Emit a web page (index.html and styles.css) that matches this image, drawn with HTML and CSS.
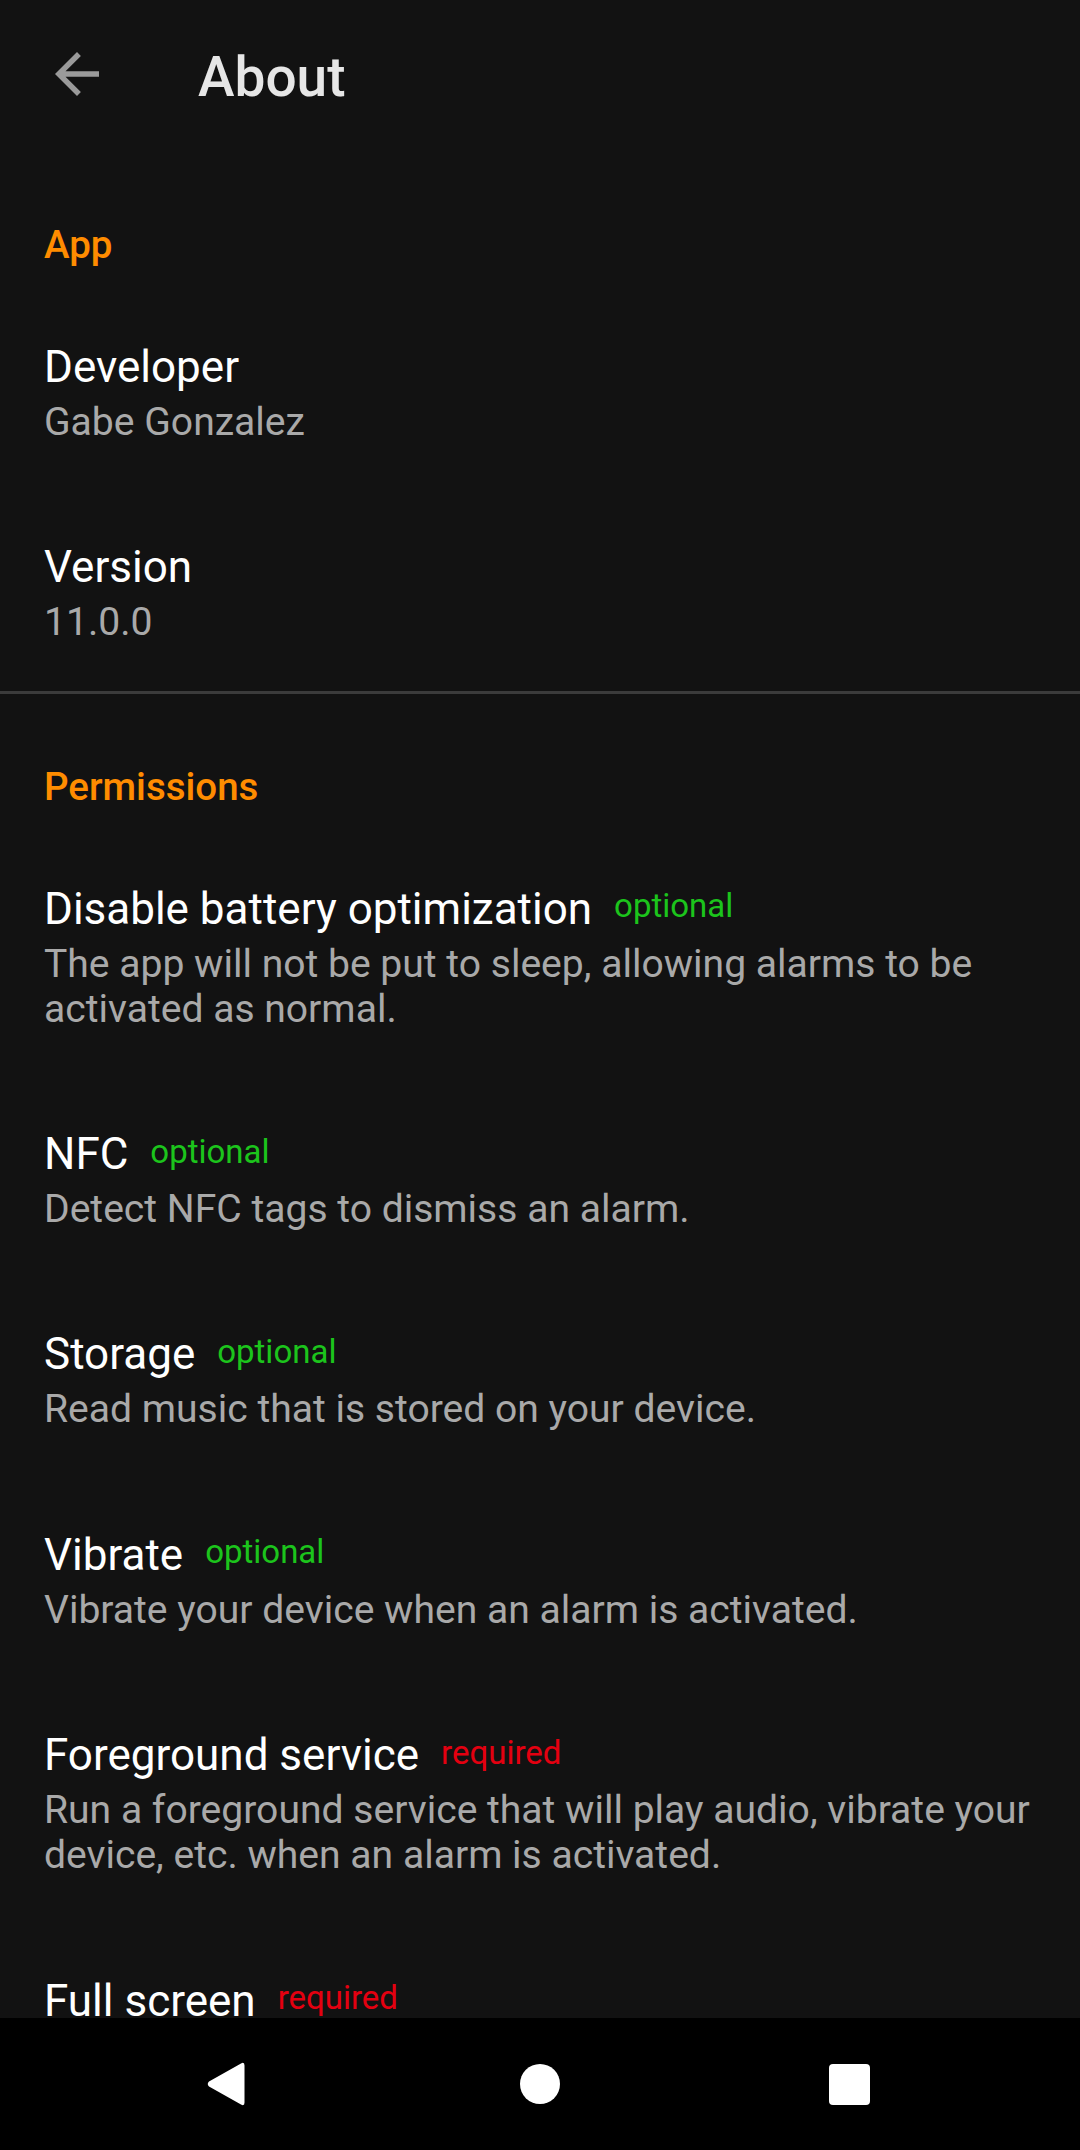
FILE: index.html
```html
<!DOCTYPE html>
<html lang="en">
<head>
<meta charset="utf-8">
<title>About</title>
<link rel="stylesheet" href="styles.css">
</head>
<body>
<div class="screen">
  <div class="content">
    <header class="toolbar">
      <div class="nav-icon">
        <svg viewBox="0 0 24 24" width="66" height="66"><path d="M20 11H7.83l5.59-5.59L12 4l-8 8 8 8 1.41-1.41L7.83 13H20v-2z" fill="#9a9a9a"/></svg>
      </div>
      <h1 class="toolbar-title">About</h1>
    </header>

    <section class="section section-app">
      <h2 class="section-title">App</h2>
      <div class="item">
        <div class="item-head"><span class="item-title">Developer</span></div>
        <div class="item-summary">Gabe Gonzalez</div>
      </div>
      <div class="item">
        <div class="item-head"><span class="item-title">Version</span></div>
        <div class="item-summary">11.0.0</div>
      </div>
    </section>

    <div class="divider"></div>

    <section class="section section-perm">
      <h2 class="section-title">Permissions</h2>
      <div class="item">
        <div class="item-head"><span class="item-title">Disable battery optimization</span><span class="tag optional">optional</span></div>
        <div class="item-summary">The app will not be put to sleep, allowing alarms to be activated as normal.</div>
      </div>
      <div class="item">
        <div class="item-head"><span class="item-title">NFC</span><span class="tag optional">optional</span></div>
        <div class="item-summary">Detect NFC tags to dismiss an alarm.</div>
      </div>
      <div class="item">
        <div class="item-head"><span class="item-title">Storage</span><span class="tag optional">optional</span></div>
        <div class="item-summary">Read music that is stored on your device.</div>
      </div>
      <div class="item">
        <div class="item-head"><span class="item-title">Vibrate</span><span class="tag optional">optional</span></div>
        <div class="item-summary">Vibrate your device when an alarm is activated.</div>
      </div>
      <div class="item">
        <div class="item-head"><span class="item-title">Foreground service</span><span class="tag required">required</span></div>
        <div class="item-summary">Run a foreground service that will play audio, vibrate your device, etc. when an alarm is activated.</div>
      </div>
      <div class="item">
        <div class="item-head"><span class="item-title">Full screen</span><span class="tag required">required</span></div>
      </div>
    </section>
  </div>

  <nav class="navbar">
    <div class="nav-btn nav-back">
      <svg width="40" height="46" viewBox="0 0 40 46"><path d="M35 2.5 Q38.5 0.5 38.5 4.5 L38.5 41.5 Q38.5 45.5 35 43.5 L3 25.5 Q0.5 23 3 20.5 Z" fill="#fff"/></svg>
    </div>
    <div class="nav-btn nav-home">
      <div class="home-dot"></div>
    </div>
    <div class="nav-btn nav-recent">
      <div class="recent-sq"></div>
    </div>
  </nav>
</div>
</body>
</html>
```

FILE: styles.css
```css
* { box-sizing: border-box; }

html, body {
  margin: 0;
  padding: 0;
  background: #121212;
}

body {
  width: 1080px;
  height: 2150px;
  overflow: hidden;
  font-family: Roboto, "Noto Sans", "Liberation Sans", sans-serif;
}

.screen {
  display: flex;
  flex-direction: column;
  height: 2150px;
}

.content {
  height: 2018px;
  overflow: hidden;
  background: #121212;
}

.toolbar {
  height: 154px;
  display: flex;
  align-items: center;
}

.nav-icon {
  width: 198px;
  height: 154px;
  display: flex;
  align-items: center;
  padding-left: 44px;
  padding-bottom: 6px;
}

.nav-icon svg { display: block; }

.toolbar-title {
  margin: 0;
  font-size: 55px;
  line-height: 64px;
  font-weight: 500;
  color: #e6e6e6;
}

.section {
  padding-top: 68px;
}

.section-perm {
  padding-top: 70px;
}

.section-title {
  margin: 0 0 25.5px 0;
  padding: 0 44px;
  font-size: 38.5px;
  line-height: 45.5px;
  font-weight: 500;
  color: #ff8c00;
}

.item {
  padding: 48px 30px 48px 44px;
}

.section-app .item:last-child {
  padding-bottom: 45px;
}

.item-head {
  display: flex;
  align-items: center;
  height: 52px;
}

.item-title {
  font-size: 44px;
  line-height: 52px;
  color: #ffffff;
  white-space: nowrap;
}

.tag {
  margin-left: 22px;
  margin-bottom: 6px;
  font-size: 33px;
  line-height: 39px;
}

.optional { color: #1cc41c; }
.required { color: #e40010; }

.item-summary {
  margin-top: 7px;
  font-size: 39.1px;
  line-height: 45.3px;
  color: #a9a9a9;
}

.divider {
  height: 3px;
  background: #3b3b3b;
}

.navbar {
  height: 132px;
  background: #000;
  display: flex;
  align-items: center;
}

.nav-btn {
  display: flex;
  align-items: center;
  justify-content: flex-end;
}

.nav-back { width: 226px; }
.nav-back svg { display: block; margin-right: -20px; }
.nav-home { width: 314px; }
.nav-recent { width: 310px; }

.home-dot {
  width: 40px;
  height: 40px;
  border-radius: 50%;
  background: #fff;
  margin-right: -20px;
}

.recent-sq {
  width: 41px;
  height: 41px;
  border-radius: 4px;
  background: #fff;
  margin-right: -20px;
}
```
